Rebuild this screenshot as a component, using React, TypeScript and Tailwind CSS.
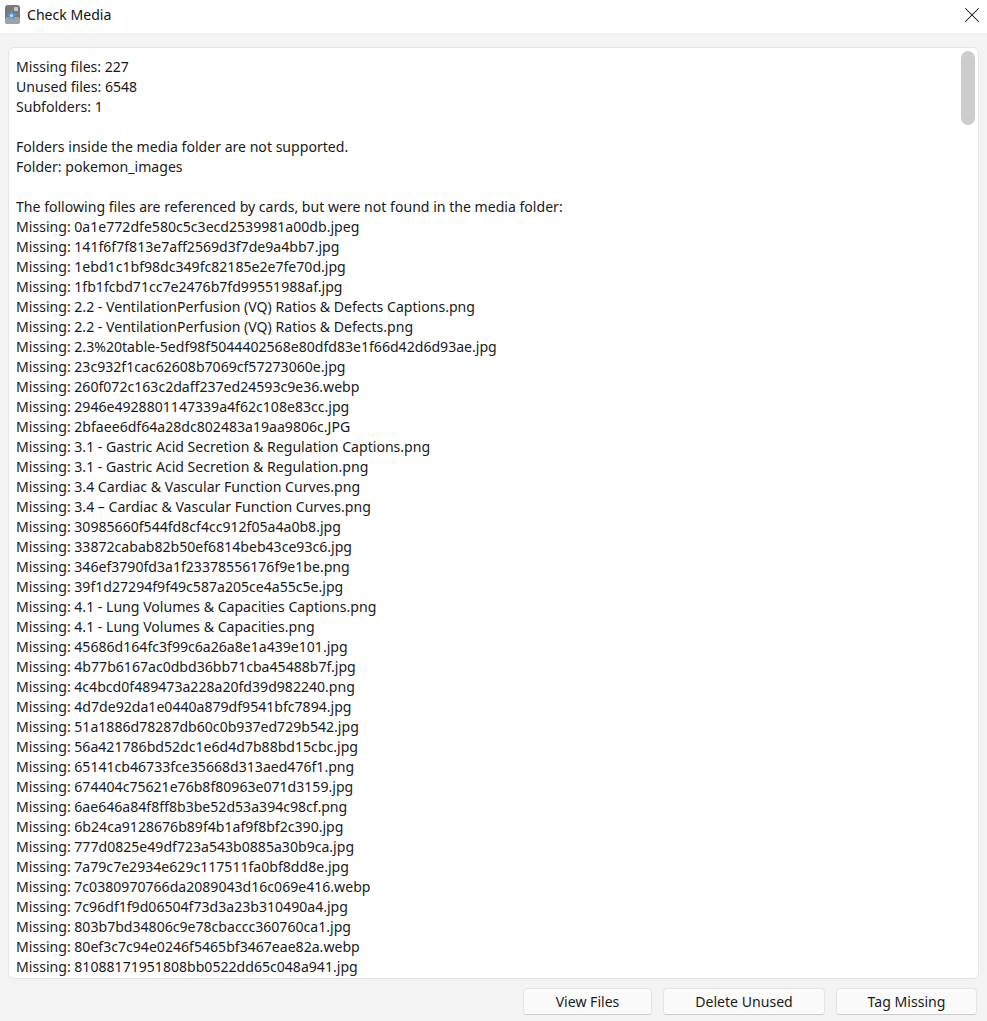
import { X } from "lucide-react";

const summary = [
  "Missing files: 227",
  "Unused files: 6548",
  "Subfolders: 1",
  "",
  "Folders inside the media folder are not supported.",
  "Folder: pokemon_images",
  "",
  "The following files are referenced by cards, but were not found in the media folder:",
];

const missing = [
  "0a1e772dfe580c5c3ecd2539981a00db.jpeg",
  "141f6f7f813e7aff2569d3f7de9a4bb7.jpg",
  "1ebd1c1bf98dc349fc82185e2e7fe70d.jpg",
  "1fb1fcbd71cc7e2476b7fd99551988af.jpg",
  "2.2 - VentilationPerfusion (VQ) Ratios & Defects Captions.png",
  "2.2 - VentilationPerfusion (VQ) Ratios & Defects.png",
  "2.3%20table-5edf98f5044402568e80dfd83e1f66d42d6d93ae.jpg",
  "23c932f1cac62608b7069cf57273060e.jpg",
  "260f072c163c2daff237ed24593c9e36.webp",
  "2946e4928801147339a4f62c108e83cc.jpg",
  "2bfaee6df64a28dc802483a19aa9806c.JPG",
  "3.1 - Gastric Acid Secretion & Regulation Captions.png",
  "3.1 - Gastric Acid Secretion & Regulation.png",
  "3.4 Cardiac & Vascular Function Curves.png",
  "3.4 – Cardiac & Vascular Function Curves.png",
  "30985660f544fd8cf4cc912f05a4a0b8.jpg",
  "33872cabab82b50ef6814beb43ce93c6.jpg",
  "346ef3790fd3a1f23378556176f9e1be.png",
  "39f1d27294f9f49c587a205ce4a55c5e.jpg",
  "4.1 - Lung Volumes & Capacities Captions.png",
  "4.1 - Lung Volumes & Capacities.png",
  "45686d164fc3f99c6a26a8e1a439e101.jpg",
  "4b77b6167ac0dbd36bb71cba45488b7f.jpg",
  "4c4bcd0f489473a228a20fd39d982240.png",
  "4d7de92da1e0440a879df9541bfc7894.jpg",
  "51a1886d78287db60c0b937ed729b542.jpg",
  "56a421786bd52dc1e6d4d7b88bd15cbc.jpg",
  "65141cb46733fce35668d313aed476f1.png",
  "674404c75621e76b8f80963e071d3159.jpg",
  "6ae646a84f8ff8b3be52d53a394c98cf.png",
  "6b24ca9128676b89f4b1af9f8bf2c390.jpg",
  "777d0825e49df723a543b0885a30b9ca.jpg",
  "7a79c7e2934e629c117511fa0bf8dd8e.jpg",
  "7c0380970766da2089043d16c069e416.webp",
  "7c96df1f9d06504f73d3a23b310490a4.jpg",
  "803b7bd34806c9e78cbaccc360760ca1.jpg",
  "80ef3c7c94e0246f5465bf3467eae82a.webp",
  "81088171951808bb0522dd65c048a941.jpg",
];

function AppIcon() {
  return (
    <svg width="15" height="19" viewBox="0 0 15 19" className="shrink-0">
      <rect x="0" y="0" width="15" height="19" rx="3" fill="#77797c" />
      <rect x="0" y="12" width="15" height="7" rx="3" fill="#a0a2a5" />
      <rect x="9" y="2" width="4" height="4" rx="1" fill="#c4c8cc" />
      <path d="M6.5 5.5l1.5 3.2 3.4.4-2.5 2.3.7 3.4-3.1-1.7-3.1 1.7.7-3.4L1.6 9.1 5 8.7z" fill="#4f9fe8" />
      <circle cx="6.5" cy="10.5" r="1.5" fill="#bfe0fa" />
    </svg>
  );
}

function Btn({ label, width }: { label: string; width: string }) {
  return (
    <button
      className={`${width} h-[27px] pt-[2px] bg-[#fbfbfb] border border-[#e5e5e5] border-b-[#cccccc] rounded-[4px] text-[14.08px] leading-none text-[#1a1a1a]`}
    >
      {label}
    </button>
  );
}

export default function App() {
  return (
    <div className="h-screen flex flex-col bg-[#f3f3f3] text-[#1a1a1a] overflow-hidden font-['Noto_Sans',sans-serif] text-[14.08px]">
      <div className="h-[33px] bg-white flex items-center pl-[5px] pr-[2px] pb-[4px]">
        <AppIcon />
        <span className="ml-[7px] text-[#111111]">Check Media</span>
        <X size={26} strokeWidth={0.95} className="ml-auto text-[#111111]" />
      </div>

      <div className="relative h-[932px] mt-[14px] mx-2 bg-white border border-[#e5e5e5] rounded-[6px] overflow-hidden pl-[7px] pt-[9px]">
        <div className="absolute top-[3px] right-[3px] w-[14px] h-[74px] rounded-[7px] bg-[#cdcdcd]" />
        {summary.map((line, i) => (
          <div key={i} className="h-5 leading-5 whitespace-nowrap">{line}</div>
        ))}
        {missing.map((name) => (
          <div key={name} className="h-5 leading-5 whitespace-nowrap">Missing: {name}</div>
        ))}
      </div>

      <div className="flex justify-end gap-[11px] pr-[10px] mt-[9px]">
        <Btn label="View Files" width="w-[129px]" />
        <Btn label="Delete Unused" width="w-[162px]" />
        <Btn label="Tag Missing" width="w-[141px]" />
      </div>
    </div>
  );
}
